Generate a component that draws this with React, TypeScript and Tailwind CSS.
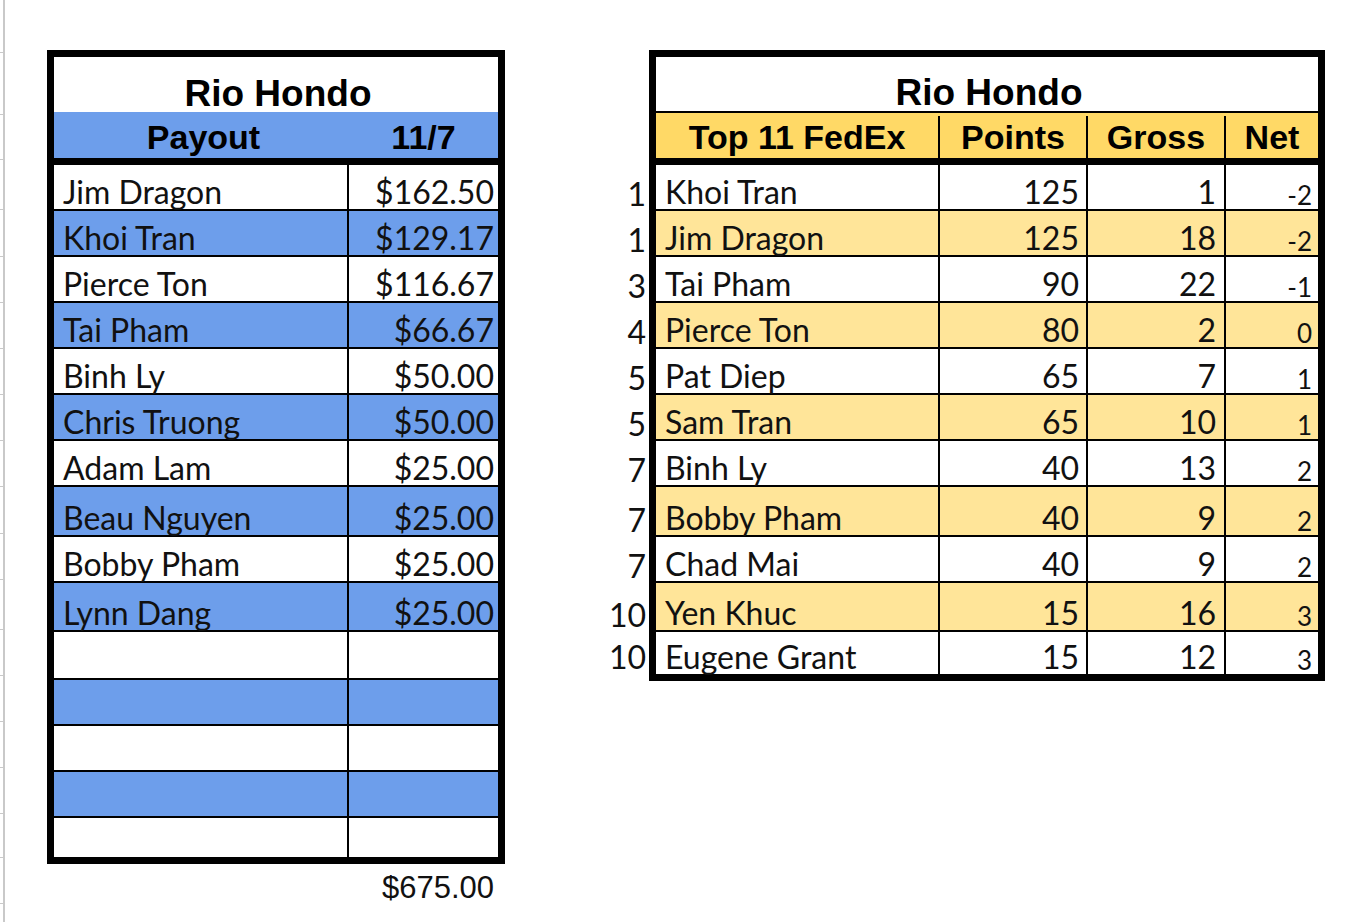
const payouts = [
	{ name: "Jim Dragon", amount: "$162.50", h: "h-[46px]", bg: "bg-white" },
	{ name: "Khoi Tran", amount: "$129.17", h: "h-[46px]", bg: "bg-[#6d9eeb]" },
	{ name: "Pierce Ton", amount: "$116.67", h: "h-[46px]", bg: "bg-white" },
	{ name: "Tai Pham", amount: "$66.67", h: "h-[46px]", bg: "bg-[#6d9eeb]" },
	{ name: "Binh Ly", amount: "$50.00", h: "h-[46px]", bg: "bg-white" },
	{ name: "Chris Truong", amount: "$50.00", h: "h-[46px]", bg: "bg-[#6d9eeb]" },
	{ name: "Adam Lam", amount: "$25.00", h: "h-[46px]", bg: "bg-white" },
	{ name: "Beau Nguyen", amount: "$25.00", h: "h-[50px]", bg: "bg-[#6d9eeb]" },
	{ name: "Bobby Pham", amount: "$25.00", h: "h-[46px]", bg: "bg-white" },
	{ name: "Lynn Dang", amount: "$25.00", h: "h-[49px]", bg: "bg-[#6d9eeb]" },
	{ name: "", amount: "", h: "h-[48px]", bg: "bg-white" },
	{ name: "", amount: "", h: "h-[46px]", bg: "bg-[#6d9eeb]" },
	{ name: "", amount: "", h: "h-[46px]", bg: "bg-white" },
	{ name: "", amount: "", h: "h-[46px]", bg: "bg-[#6d9eeb]" },
	{ name: "", amount: "", h: "h-[39px]", bg: "bg-white" },
]

const fedex = [
	{ rank: 1, name: "Khoi Tran", points: 125, gross: 1, net: -2, h: "h-[46px]", bg: "bg-white" },
	{ rank: 1, name: "Jim Dragon", points: 125, gross: 18, net: -2, h: "h-[46px]", bg: "bg-[#ffe599]" },
	{ rank: 3, name: "Tai Pham", points: 90, gross: 22, net: -1, h: "h-[46px]", bg: "bg-white" },
	{ rank: 4, name: "Pierce Ton", points: 80, gross: 2, net: 0, h: "h-[46px]", bg: "bg-[#ffe599]" },
	{ rank: 5, name: "Pat Diep", points: 65, gross: 7, net: 1, h: "h-[46px]", bg: "bg-white" },
	{ rank: 5, name: "Sam Tran", points: 65, gross: 10, net: 1, h: "h-[46px]", bg: "bg-[#ffe599]" },
	{ rank: 7, name: "Binh Ly", points: 40, gross: 13, net: 2, h: "h-[46px]", bg: "bg-white" },
	{ rank: 7, name: "Bobby Pham", points: 40, gross: 9, net: 2, h: "h-[50px]", bg: "bg-[#ffe599]" },
	{ rank: 7, name: "Chad Mai", points: 40, gross: 9, net: 2, h: "h-[46px]", bg: "bg-white" },
	{ rank: 10, name: "Yen Khuc", points: 15, gross: 16, net: 3, h: "h-[49px]", bg: "bg-[#ffe599]" },
	{ rank: 10, name: "Eugene Grant", points: 15, gross: 12, net: 3, h: "h-[42px]", bg: "bg-white" },
]

const ticks = [
	"h-[53px]", "h-[62px]", "h-[45px]", "h-[50px]", "h-[47px]", "h-[46px]", "h-[46px]", "h-[46px]",
	"h-[46px]", "h-[46px]", "h-[47px]", "h-[46px]", "h-[50px]", "h-[46px]", "h-[46px]", "h-[46px]",
	"h-[46px]", "h-[44px]", "h-[46px]",
]

const body = "font-['Lato',sans-serif] text-[32px] leading-none text-[#111]"
const head = "font-['Liberation_Sans',Arial,sans-serif] font-bold leading-none text-black"

const PayoutTable = () => {
	return (
		<div className="ml-[42px] flex flex-col">
			<div className="w-[458px] border-[7px] border-black">
				<div className={`flex h-[55px] items-end justify-center pl-[4px] text-[37px] ${head}`}>
					Rio Hondo
				</div>
				<div className={`flex h-[53px] border-b-[7px] border-black bg-[#6d9eeb] pt-[4px] text-[34px] ${head}`}>
					<div className="flex w-[295px] items-center justify-center pl-[4px]">Payout</div>
					<div className="flex flex-1 items-center justify-center">11/7</div>
				</div>
				{payouts.map((row, i) => (
					<div
						key={i}
						className={`flex ${row.h} ${row.bg} ${i < payouts.length - 1 ? "border-b-2 border-black" : ""} ${body}`}
					>
						<div className="flex w-[295px] items-end border-r-2 border-black pb-[1px] pl-[9px]">
							{row.name}
						</div>
						<div className="flex flex-1 items-end justify-end pb-[1px] pr-[4px]">{row.amount}</div>
					</div>
				))}
			</div>
			<div className="mt-[8px] pr-[11px] text-right font-['Liberation_Sans',Arial,sans-serif] text-[31px] leading-none text-[#111]">
				$675.00
			</div>
		</div>
	)
}

const FedexTable = () => {
	return (
		<div className="ml-[99px] flex">
			<div className={`flex w-[45px] flex-col ${body}`}>
				<div className="h-[115px]" />
				{fedex.map((row, i) => (
					<div key={i} className={`flex ${row.h} items-end justify-end pb-[1px] pr-[3px]`}>
						{row.rank}
					</div>
				))}
			</div>
			<div className="w-[676px] border-[7px] border-black">
				<div
					className={`flex h-[56px] items-end justify-center border-b-2 border-black pl-[4px] text-[37px] ${head}`}
				>
					Rio Hondo
				</div>
				<div className={`flex h-[52px] border-b-[7px] border-black bg-[#ffd966] pt-[3px] text-[34px] ${head}`}>
					<div className="flex w-[284px] items-center justify-center border-r-2 border-black">
						Top 11 FedEx
					</div>
					<div className="flex w-[148px] items-center justify-center border-r-2 border-black">Points</div>
					<div className="flex w-[138px] items-center justify-center border-r-2 border-black">Gross</div>
					<div className="flex flex-1 items-center justify-center">Net</div>
				</div>
				{fedex.map((row, i) => (
					<div
						key={i}
						className={`flex ${row.h} ${row.bg} ${i < fedex.length - 1 ? "border-b-2 border-black" : ""} ${body}`}
					>
						<div className="flex w-[284px] items-end border-r-2 border-black pb-[1px] pl-[9px]">
							{row.name}
						</div>
						<div className="flex w-[148px] items-end justify-end border-r-2 border-black pb-[1px] pr-[7px]">
							{row.points}
						</div>
						<div className="flex w-[138px] items-end justify-end border-r-2 border-black pb-[1px] pr-[8px]">
							{row.gross}
						</div>
						<div className="flex flex-1 items-end justify-end pb-[1px] pr-[6px] text-[26px]">{row.net}</div>
					</div>
				))}
			</div>
		</div>
	)
}

const App = () => {
	return (
		<div className="flex min-h-[922px] w-[1356px] overflow-hidden bg-white">
			<div className="flex w-[5px] flex-col border-r-2 border-[#c9c9c9]">
				{ticks.map((h, i) => (
					<div key={i} className={`${h} shrink-0 border-b border-[#c9c9c9]`} />
				))}
			</div>
			<div className="flex items-start pt-[50px]">
				<PayoutTable />
				<FedexTable />
			</div>
		</div>
	)
}

export default App
